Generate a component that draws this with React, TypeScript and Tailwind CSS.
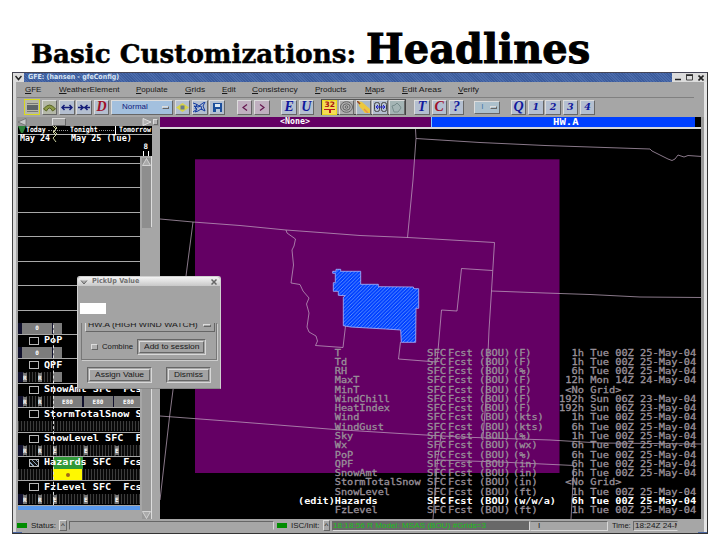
import { useLayoutEffect, useRef, useState } from "react";
import type { ReactNode } from "react";

// Stretches a line of text horizontally until it fills its box.
function Fit({ className = "", children }: { className?: string; children: ReactNode }) {
  const outer = useRef<HTMLSpanElement>(null);
  const inner = useRef<HTMLSpanElement>(null);
  const [scale, setScale] = useState(1);
  useLayoutEffect(() => {
    if (outer.current && inner.current) {
      setScale(outer.current.clientWidth / inner.current.offsetWidth);
    }
  }, []);
  return (
    <span ref={outer} className={`flex shrink-0 items-center ${className}`}>
      <span ref={inner} className="block shrink-0 origin-left whitespace-pre" style={{ transform: `scaleX(${scale})` }}>
        {children}
      </span>
    </span>
  );
}

const raised = "border border-t-[#dcdcdc] border-l-[#dcdcdc] border-b-[#666] border-r-[#666]";
const sunken = "border border-t-[#666] border-l-[#666] border-b-[#d8d8d8] border-r-[#d8d8d8]";

const menus: [string, string][] = [
  ["GFE", "w-4 mr-[18px]"],
  ["WeatherElement", "w-[60px] mr-[17px]"],
  ["Populate", "w-8 mr-[17px]"],
  ["Grids", "w-5 mr-[17px]"],
  ["Edit", "w-3.5 mr-4"],
  ["Consistency", "w-[46px] mr-[17px]"],
  ["Products", "w-8 mr-[18px]"],
  ["Maps", "w-5 mr-[17px]"],
  ["Edit Areas", "w-[39px] mr-[17px]"],
  ["Verify", "w-[21px]"],
];

function Tool({ className = "bg-[#b4bfd0]", children }: { className?: string; children?: ReactNode }) {
  return (
    <div className={`flex h-[15px] w-[15.5px] shrink-0 items-center justify-center ${raised} ${className}`}>{children}</div>
  );
}

function Letter({ c, red = false }: { c: string; red?: boolean }) {
  return (
    <Tool>
      <span className={`font-['Liberation_Serif',serif] text-[14px] leading-none font-bold italic ${red ? "text-[#a01028]" : "text-[#10189c]"}`}>{c}</span>
    </Tool>
  );
}

function Digit({ c }: { c: string }) {
  return (
    <Tool>
      <span className="font-['DejaVu_Serif',serif] text-[9.5px] leading-none font-bold text-[#10189c] italic">{c}</span>
    </Tool>
  );
}

function Toolbar() {
  return (
    <div className="flex h-[19px] items-center gap-[1.8px] pb-px pl-[8px]">
      <div className="flex h-4 w-4 shrink-0 items-center justify-center border border-[#d8d820] bg-[#b8b8a8]">
        <svg width="11" height="9" viewBox="0 0 11 9"><path d="M0 .5h11M0 8.500h11" stroke="#777" strokeWidth="1" /><rect y="2" width="11" height="5" fill="#5e6468" /></svg>
      </div>
      <Tool className="bg-[#b4b8a8]">
        <svg width="13" height="9" viewBox="0 0 13 9"><path d="M.5 6Q6.500-2 12.500 6L9.500 8Q6.500 2 3.500 8Z" fill="#8c9a48" stroke="#596328" /></svg>
      </Tool>
      <Tool>
        <svg width="12" height="7" viewBox="0 0 12 7"><path d="M1 3.500h10M3.500 1 1 3.500 3.500 6M8.500 1 11 3.500 8.500 6" fill="none" stroke="#141c78" strokeWidth="1.500" /></svg>
      </Tool>
      <Tool>
        <svg width="12" height="7" viewBox="0 0 12 7"><path d="M0 3.500h12M2.500 1 5 3.500 2.500 6M9.500 1 7 3.500 9.500 6" fill="none" stroke="#141c78" strokeWidth="1.500" /></svg>
      </Tool>
      <Letter c="D" red />
      <div className={`flex h-[15px] w-[62px] shrink-0 items-center bg-[#a3c0de] pl-[10px] text-[#10187c] ${raised}`}>
        <Fit className="w-[26px]">Normal</Fit>
        <span className={`ml-[14px] h-[3px] w-[7px] bg-[#b8cce0] ${raised}`} />
      </div>
      <Tool>
        <svg width="13" height="9" viewBox="0 0 13 9"><path d="M0 4.500 6.500 0 13 4.500 6.500 9Z" fill="#d8d448" /><path d="M4.500 2.500h4v4h-4z" fill="#6a7a8a" /></svg>
      </Tool>
      <Tool>
        <svg width="13" height="11" viewBox="0 0 13 11"><path d="M0 1 3 2 6 4 10 1 12 0 10 4 12 9 8 7 5 9 2 10 4 7 1 4 5 5 8 4 9 8M0 10 4 7M4 2 2 7" fill="none" stroke="#123aa0" strokeWidth="1" /></svg>
      </Tool>
      <Tool>
        <svg width="9" height="9" viewBox="0 0 9 9"><path d="M0 0h9v9H0z" fill="#1c4f9c" /><path d="M2 1h5v3H2z" fill="#dce8f4" /><path d="M3 6h4v3H3z" fill="#b8c8dc" /></svg>
      </Tool>
      <div className="ml-[8.500px]" />
      <Tool className="bg-[#c0b0c0]">
        <svg width="6" height="7" viewBox="0 0 6 7"><path d="M5 .5 1 3.500 5 6.500" fill="none" stroke="#64164e" strokeWidth="1.200" /></svg>
      </Tool>
      <Tool className="bg-[#c0b0c0]">
        <svg width="6" height="7" viewBox="0 0 6 7"><path d="M1 .5 5 3.500 1 6.500" fill="none" stroke="#64164e" strokeWidth="1.200" /></svg>
      </Tool>
      <div className="ml-[8px]" />
      <Letter c="E" />
      <Letter c="U" />
      <div className="ml-[5px] flex h-4 shrink-0 items-center gap-[1.300px] border border-t-[#555] border-r-[#444] border-b-[#444] border-l-[#444]">
        <div className="flex h-[15px] w-[15.500px] flex-col items-center justify-center border border-[#e8dc20] bg-[#f4dc58]">
          <span className="border-b border-[#b81c20] font-['DejaVu_Sans',sans-serif] text-[7.500px] leading-[8px] font-bold text-[#a81410]">32</span>
          <span className="h-[3px] w-[2px] bg-[#b81c20]" />
        </div>
        <Tool className="bg-[#b0b0b0]">
          <svg width="13" height="12" viewBox="0 0 13 12"><g fill="none" stroke="#646464"><ellipse cx="6.500" cy="6" rx="6" ry="5.300" /><ellipse cx="6.500" cy="6" rx="3.700" ry="3.200" /><circle cx="6.500" cy="6" r="1.300" /></g></svg>
        </Tool>
        <Tool className="bg-[#a8b8c4]">
          <svg width="13" height="12" viewBox="0 0 13 12"><path d="M1 0 5 1 13 8 13 12 8 12 2 5Z" fill="#ecc83c" /><path d="m0 0 3 3" stroke="#94452c" strokeWidth="1.500" /><path d="m7 8 4 4" stroke="#e89048" strokeWidth="1.500" /></svg>
        </Tool>
        <Tool>
          <svg width="13" height="11" viewBox="0 0 13 11"><g fill="none" stroke="#444"><rect x=".5" y=".5" width="5" height="9" rx="2" /><rect x="7.500" y=".5" width="5" height="9" rx="2" /></g><path d="M2 5h9M4 3 2 5l2 2M9 3l2 2-2 2" fill="none" stroke="#2020c8" /></svg>
        </Tool>
        <Tool className="bg-[#a4b4b4]">
          <svg width="11" height="11" viewBox="0 0 11 11"><path d="M1 4 4 3 6 1 9 4 10 6 7 10 3 10 2 7Z" fill="none" stroke="#788c8c" /></svg>
        </Tool>
      </div>
      <div className="ml-[5px]" />
      <Letter c="T" />
      <Letter c="C" red />
      <Letter c="?" />
      <div className={`ml-[8px] flex h-[13px] w-[26px] shrink-0 items-center gap-[7px] bg-[#acc0cc] pl-[6px] text-[#4878a8] ${raised}`}>
        <span>I</span>
        <span className={`h-[3px] w-[7px] ${raised}`} />
      </div>
      <div className="ml-[7px]" />
      <Letter c="Q" />
      <Digit c="1" />
      <Digit c="2" />
      <Digit c="3" />
      <Digit c="4" />
    </div>
  );
}

const mono = "font-['DejaVu_Sans_Mono','Liberation_Mono',monospace]";
const dots = "bg-[repeating-linear-gradient(90deg,#3c3c3c_0_1px,#080808_1px_3px)]";

type Seg = { cls: string; t: string };
const g = "bg-[#7c7c7c] justify-center";
const shortBar: Seg[] = [{ cls: "w-[4px] bg-[#10102c]", t: "" }, { cls: `w-[30px] ${g}`, t: "0" }, { cls: "w-[1px] bg-[#10102c]", t: "" }, { cls: `w-[9px] ${g}`, t: "" }];
const rr: Seg[] = [{ cls: "w-[5px] bg-[#10102c]", t: "" }, { cls: "w-[15px]", t: "R" }, { cls: "w-[15px]", t: "R" }];
const marks: Seg[] = [...rr, { cls: "w-[31px]", t: "E" }, { cls: "w-[31px]", t: "E" }, { cls: "w-[25px]", t: "E" }];

function Cells({ segs }: { segs: Seg[] }) {
  return (
    <div className="flex h-[11px] pt-[0.500px]">
      {segs.map((s, i) => (
        <span key={i} className={`flex h-full shrink-0 items-center overflow-hidden text-[6px] font-bold text-white ${s.cls} ${s.cls.includes("bg-") ? "" : dots}`}>
          {s.t.length === 1 && s.t !== "0" && s.t !== " " ? <span className="bg-[#777] leading-[9px]">{s.t}</span> : s.t}
        </span>
      ))}
    </div>
  );
}

function Row({ label, segs, haz = false }: { label: string; segs: Seg[]; haz?: boolean }) {
  return (
    <div className="h-[24.400px] shrink-0 overflow-hidden border-b-[1.500px] border-[#a8a8a8]">
      <div className="flex h-[12px] items-center">
        {label && (
          <>
            <span className={`mr-[5px] ml-[11px] h-[8px] w-[10px] shrink-0 border border-[#b8b8b8] ${haz ? "bg-[repeating-linear-gradient(45deg,#111_0_2px,#88a0b8_2px_3px)]" : ""}`} />
            <span className={`flex h-full ${haz ? "bg-[linear-gradient(90deg,transparent_9px,#309838_9px_39px,transparent_39px)]" : ""}`}>
              {label.length > 3 ? <Fit className="w-[98px]">{label}</Fit> : <Fit className="w-[18px]">{label}</Fit>}
            </span>
          </>
        )}
      </div>
      <Cells segs={segs} />
    </div>
  );
}

function GridManager() {
  const e80: Seg = { cls: `w-[29px] ${g}`, t: "E80" };
  const gap: Seg = { cls: "w-[1.500px] bg-[#10102c]", t: "" };
  return (
    <div className="flex w-[142.500px] shrink-0 flex-col">
      <div className="flex h-[134px] shrink-0 flex-col">
        <div className="flex h-[9px] w-[142px] items-center bg-[#969696]">
          <svg width="10" height="8" viewBox="0 0 10 8"><path d="M1 4 9 .5v7Z" fill="#c8c8c8" stroke="#666" strokeWidth=".7" /></svg>
          <span className={`ml-[25px] h-2 w-[14px] bg-[#a8a8a8] ${raised}`} />
          <svg className="ml-[76px]" width="10" height="8" viewBox="0 0 10 8"><path d="M9 4 1 .5v7Z" fill="#b0b0b0" stroke="#eee" strokeWidth=".8" /></svg>
          <span className={`ml-px h-[6px] w-[5px] bg-[#b8b8b8] ${raised}`} />
        </div>
        <div className={`relative h-[30px] w-[134px] overflow-hidden bg-black ml-px text-[7.500px] font-bold text-white ${mono}`}>
          <div className="flex h-[9px] items-center border-b border-[#b0b0b0]">
            <svg width="8" height="8" viewBox="0 0 8 8"><path d="M0 0h8L5 7H3Z" fill="#2d8038" /></svg>
            <Fit className="w-[20px]">Today</Fit>
            <span className="mx-[2px] w-[20px] border-b border-dotted border-[#999]" />
            <Fit className="w-[28px]">Tonight</Fit>
            <span className="mx-[1px] w-[15px] border-b border-dotted border-[#999]" />
            <span className="mr-[3px] h-full w-px bg-white" />
            <Fit className="w-[32px]">Tomorrow</Fit>
          </div>
          <div className="flex h-[8px] items-center pl-[2px] text-[8px]">
            <Fit className="w-[30px]">May 24</Fit>
            <Fit className="ml-[21px] w-[61px]">May 25 (Tue)</Fit>
          </div>
          <div className="flex h-[8px] items-center justify-end pr-[4px]">8</div>
          <div className="ml-auto mr-[3px] h-[5px] w-[6px] border-x border-white" />
          <svg className="absolute top-0 left-[34px]" width="6" height="17" viewBox="0 0 6 17"><path d="M1 0 4 3 1 6 4 9 1 12 4 16M3 0 5 2 2 5 5 8" fill="none" stroke="#ccd0a0" strokeWidth="1" /></svg>
        </div>
        <div className="flex h-[95px]">
          <div className="ml-px flex w-[122px] flex-col bg-black">
            <div className="h-[8px] shrink-0 border-y-[1.500px] border-[#a8a8a8]" />
            {[0, 1, 2].map((i) => <div key={i} className="h-[24.400px] shrink-0 border-b-[1.500px] border-[#a8a8a8]" />)}
          </div>
          <div className="ml-[2px] mt-[2px] h-[70px] w-[9px] bg-[#8e8e8e]">
            <svg width="9" height="8" viewBox="0 0 9 8"><path d="M4.500 .5 8.500 7.500h-8Z" fill="#aaa" stroke="#e0e0e0" strokeWidth=".8" /></svg>
          </div>
          <div className="h-[71px] w-px bg-[#ddd]" />
        </div>
      </div>
      <div className="flex h-[268px] shrink-0">
        <div className={`relative ml-px flex w-[122px] flex-col overflow-hidden bg-black text-[9px] font-bold text-white ${mono}`}>
          <div className="h-[10.800px] shrink-0 border-b-[1.500px] border-[#a8a8a8]" />
          {[0, 1].map((i) => <div key={i} className="h-[24.400px] shrink-0 border-b-[1.500px] border-[#a8a8a8]" />)}
          <Row label="" segs={shortBar} />
          <Row label="PoP" segs={shortBar} />
          <Row label="QPF" segs={[...rr, { cls: `w-[9px] ${g}`, t: "" }]} />
          <Row label="SnowAmt SFC  Fcs" segs={[...rr, e80, gap, e80, gap, e80]} />
          <Row label="StormTotalSnow S" segs={[{ cls: "w-[122px]", t: "" }]} />
          <Row label="SnowLevel SFC  F" segs={marks} />
          <Row haz label="Hazards SFC  Fcs" segs={[{ cls: "w-[35px]", t: "" }, { cls: "w-[29px] bg-[#fff800] justify-center", t: " " }, { cls: "w-[58px]", t: "" }]} />
          <Row label="FzLevel SFC  Fcs" segs={marks} />
          <div className="h-[4px] shrink-0 bg-[#5898ec]" />
          <div className="flex-1 bg-[#a6a6a6]" />
          <div className="absolute top-[74px] left-[35px] h-[180px] border-l border-dashed border-[#ddd]" />
          <div className="absolute top-[222px] left-[48px] size-[4px] rounded-full bg-[#a06818]" />
        </div>
        <div className="mt-[135px] ml-[2px] flex w-[9px] flex-col justify-end bg-[#989898]">
          <svg width="9" height="8" viewBox="0 0 9 8"><path d="M4.500 7.500 8.500 .5h-8Z" fill="#aaa" stroke="#e0e0e0" strokeWidth=".8" /></svg>
        </div>
        <div className="mt-[135px] w-px bg-[#ddd]" />
      </div>
    </div>
  );
}

const elements = [
  ["T", "(F)", "  1h Tue 00Z 25-May-04"],
  ["Td", "(F)", "  1h Tue 00Z 25-May-04"],
  ["RH", "(%)", "  6h Tue 00Z 25-May-04"],
  ["MaxT", "(F)", " 12h Mon 14Z 24-May-04"],
  ["MinT", "(F)", " <No Grid>            "],
  ["WindChill", "(F)", "192h Sun 06Z 23-May-04"],
  ["HeatIndex", "(F)", "192h Sun 06Z 23-May-04"],
  ["Wind", "(kts)", "  1h Tue 00Z 25-May-04"],
  ["WindGust", "(kts)", "  6h Tue 00Z 25-May-04"],
  ["Sky", "(%)", "  1h Tue 00Z 25-May-04"],
  ["Wx", "(wx)", "  6h Tue 00Z 25-May-04"],
  ["PoP", "(%)", "  6h Tue 00Z 25-May-04"],
  ["QPF", "(in)", "  6h Tue 00Z 25-May-04"],
  ["SnowAmt", "(in)", "  6h Tue 00Z 25-May-04"],
  ["StormTotalSnow", "(in)", " <No Grid>            "],
  ["SnowLevel", "(ft)", "  1h Tue 00Z 25-May-04"],
  ["Hazards", "(w/w/a)", "  6h Tue 00Z 25-May-04"],
  ["FzLevel", "(ft)", "  1h Tue 00Z 25-May-04"],
];

function MapView() {
  return (
    <div className="flex min-w-0 flex-1 flex-col">
      <div className={`flex h-[10px] shrink-0 items-center bg-black text-[8px] font-bold text-white ${mono}`}>
        <div className="flex h-full w-[271px] items-center justify-center bg-[#640064]"><Fit className="w-[30px]">&lt;None&gt;</Fit></div>
        <div className="flex h-full w-[264px] items-center justify-center border-l border-[#8cf] bg-[#0040ff] pl-[6px]"><Fit className="w-[26px] text-[9px]">HW.A</Fit></div>
      </div>
      <div className="h-[1.500px] shrink-0 bg-[#d8d8d8]" />
      <div className="relative flex-1 overflow-hidden bg-black">
        <svg className="block" width="542" height="392" viewBox="160 129 542 392">
          <defs>
            <pattern id="hatch" width="3.600" height="3.600" patternUnits="userSpaceOnUse">
              <path d="M-1 4.600 4.600-1M-1 1 1-1M2.600 4.600 4.600 2.600" stroke="#78a8ff" strokeWidth=".75" />
            </pattern>
          </defs>
          <rect x="195" y="159.300" width="364.500" height="313.700" fill="#640064" />
          <g id="borders" fill="none" stroke="#c4acc4" strokeWidth=".7">
            <path d="M160 219 193 222 240 225.500 286 230 327 233 360 235.500 408 237.500 494.500 242.500 491.500 291 489 330 486 400 483 437" />
            <path d="M193 222 186 276 173 390 169.500 417 160 500M415.500 129 416 138.500 413 180 407.500 237.500M416 138.500 480 142.500 545 145.500 620 148 650 149 652 151 668 159 672 160.500 675 159 678 155 684 157 688 155.500 702 156.500" />
            <path d="M286 230 287 233 295.500 239 294 246 292 250 293.500 265 291 283 300 284.500 303 291 309 298 306.500 304 309 313 307 327 309 332 316 336 317.500 341 315.500 345.500 343 347.500 345.500 326" />
            <path d="M492.500 270.500 461.500 268.500 457 311 441.500 310 437 362 398.500 359 400.500 342M491.500 291 545 293 590 294.500 640 297 702 297.500" />
            <path d="M160 416 240 422 335 429.500 400 433.500 460 437 550 440 600 443 702 444M441 436 437.500 460 433 519M437.500 460 500 462 574 465.500 571 519" />
          </g>
          <path id="zone" d="M336 269.300h4.700v2h20v13h17.600v2.400l35 .3.700 1.700h4.700v19.600H416l-.3 34h-14.400l-.6-12.300-15.400-1-34.600-2-7.400-1.300V297.300l2-1.600-7-.4v-4h-5v-8.600h2v-9.400h-2.600v-2H336Z" fill="#0040ff" />
          <path d="M336 269.300h4.700v2h20v13h17.600v2.400l35 .3.700 1.700h4.700v19.600H416l-.3 34h-14.400l-.6-12.300-15.400-1-34.600-2-7.400-1.300V297.300l2-1.600-7-.4v-4h-5v-8.600h2v-9.400h-2.600v-2H336Z" fill="url(#hatch)" stroke="#a8b8ff" strokeWidth=".8" />
        </svg>
        <div className={`absolute top-[220px] left-[138px] text-[9px] text-[#999099] ${mono}`}>
          {elements.map(([name, unit, time]) => (
            <div key={name} className={`flex h-[9.270px] items-center ${name === "Hazards" ? "font-bold text-white" : "[-webkit-text-stroke:0.3px]"}`}>
              <Fit className="w-[129px]">{(name === "Hazards" ? "(edit)" : "      ") + name.padEnd(15)}</Fit>
              <Fit className="w-[18.600px]">SFC</Fit>
              <Fit className="ml-[2.500px] w-[25px]">Fcst</Fit>
              <Fit className="ml-[6px] w-[31px]">(BOU)</Fit>
              <Fit className="ml-[3px] w-[43.400px]">{unit.padEnd(7)}</Fit>
              <Fit className="ml-[3.500px] w-[136.500px]">{time}</Fit>
            </div>
          ))}
        </div>
      </div>
    </div>
  );
}

function PickUpDialog() {
  return (
    <div className="absolute top-[276px] left-[77px] flex h-[113px] w-[144px] flex-col rounded-t-[3px] border border-[#d0d0d0] border-b-[#888] bg-[#a3a3a3] text-[8px] text-[#181818]">
      <div className="flex h-[9px] shrink-0 items-center rounded-t-[3px] bg-gradient-to-b from-[#f4f4f4] to-[#c8c8c8] pr-[3px] pl-[2px] text-[7px] font-bold text-[#707070]">
        <svg width="8" height="6" viewBox="0 0 8 6"><path d="M1 1.500 4 5 7 1.500" fill="#aaa" stroke="#666" /></svg>
        <Fit className={`ml-[4px] w-[47px] font-['DejaVu_Sans',sans-serif]`}>PickUp Value</Fit>
        <svg className="ml-auto" width="6" height="6" viewBox="0 0 6 6"><path d="m.5 .5 5 5m0-5-5 5" stroke="#666" strokeWidth="1.500" /></svg>
      </div>
      <div className="mt-[17px] ml-[2px] h-[11px] w-[26px] shrink-0 bg-white" />
      <div className="mt-[9px] mx-[3px] flex h-[37px] shrink-0 flex-col border-x border-b border-x-[#777] border-b-[#777] shadow-[1px_1px_0_#ccc]">
        <div className="ml-[3px] flex h-[9px] w-[130px] items-end overflow-hidden border-r border-b border-l border-r-[#666] border-b-[#666] border-l-[#ddd]">
          <div className="flex h-[12px] shrink-0 items-center pl-[2px]">
            <Fit className="w-[110px]">HW.A (HIGH WIND WATCH)</Fit>
            <span className={`ml-[5px] h-[3px] w-[8px] ${raised}`} />
          </div>
        </div>
        <div className="mt-[7px] flex items-center pl-[9px]">
          <span className={`h-[6px] w-[7px] bg-[#b0b0b0] ${raised}`} />
          <Fit className="ml-[4px] w-[31px]">Combine</Fit>
          <div className={`ml-[4px] p-px ${sunken}`}>
            <div className={`flex h-[12px] items-center px-[4px] ${raised}`}><Fit className="w-[55px]">Add to session</Fit></div>
          </div>
        </div>
      </div>
      <div className="mt-[7px] flex justify-between pr-[9px] pl-[9px]">
        <div className={`p-px ${sunken}`}>
          <div className={`flex h-[12px] items-center px-[5px] ${raised}`}><Fit className="w-[49px]">Assign Value</Fit></div>
        </div>
        <div className={`p-px ${sunken}`}>
          <div className={`flex h-[12px] items-center px-[5px] ${raised}`}><Fit className="w-[29px]">Dismiss</Fit></div>
        </div>
      </div>
    </div>
  );
}

function StatusBar() {
  return (
    <div className="flex h-[13px] shrink-0 items-center">
      <span className="ml-[1px] h-[5px] w-[10px] bg-[#008c00]" />
      <Fit className="ml-[4px] w-[25px]">Status:</Fit>
      <span className={`ml-[3px] flex h-[11px] w-[8px] justify-center leading-[10px] ${raised}`}>^</span>
      <span className={`ml-[2px] h-[9px] w-[205px] ${sunken} border-b-transparent`} />
      <span className="ml-[3px] h-[5px] w-[10px] bg-[#008c00]" />
      <Fit className="ml-[4px] w-[28px]">ISC/Init:</Fit>
      <span className={`ml-[4px] flex h-[11px] w-[7px] justify-center leading-[10px] ${raised}`}>^</span>
      <span className={`ml-[2px] flex h-[10px] w-[198px] items-center bg-[#686868] text-[#18c018] ${sunken}`}><Fit className="w-[153px]">18:18:56 R Model: MSAS (BOU) #Grids=3</Fit></span>
      <span className={`flex h-[10px] w-[78px] items-center pl-[7px] ${sunken} border-l-transparent`}>I</span>
      <Fit className="ml-[4px] w-[19px]">Time:</Fit>
      <span className={`ml-[2px] flex h-[10px] w-[45px] items-center overflow-hidden pl-px ${sunken} border-r-transparent`}><Fit className="w-[46px]">18:24Z 24-M</Fit></span>
    </div>
  );
}

export default function App() {
  return (
    <div className="relative h-[540px] w-[720px] overflow-hidden bg-white font-['Liberation_Sans',Arial,sans-serif] text-[8px] leading-none text-[#181818]">
      <h1 className="flex h-[72px] items-baseline pt-[29px] pl-[31px] font-['DejaVu_Serif',serif] font-bold text-black">
        <Fit className="w-[325px] text-[26px] [-webkit-text-stroke:0.5px_black]">Basic Customizations:</Fit>
        <Fit className="ml-[10px] w-[224px] text-[41px] [-webkit-text-stroke:1px_black]">Headlines</Fit>
      </h1>
      <div className="relative ml-[12px] flex h-[462px] w-[696px] flex-col border border-t-[#445] border-r-[#333] border-b-[#333] border-l-[#444] bg-[#a6a6a6]">
        <div className="absolute right-0 bottom-0 size-[9px] bg-[#4a66a0]" />
        <div className="absolute bottom-0 left-0 size-[9px] bg-[#4a66a0]" />
        <div className="flex h-[9px] shrink-0 items-center bg-[repeating-linear-gradient(45deg,#3c5c9c_0_1px,#4c6cac_1px_2px)]">
          <div className="flex h-full w-[11px] items-center justify-center bg-[#dcdcdc]">
            <svg width="7" height="6" viewBox="0 0 7 6"><path d="M.5 1 3.500 4.500 6.500 1" fill="none" stroke="#222" strokeWidth="1.500" /></svg>
          </div>
          <Fit className="ml-[4px] w-[91px] font-['DejaVu_Sans',sans-serif] text-[7px] font-bold text-[#d8e4f4]">GFE: (hansen - gfeConfig)</Fit>
          <div className="ml-auto flex h-full w-[35px] items-center justify-around bg-[#dcdcdc]">
            <svg width="6" height="7" viewBox="0 0 6 7"><path d="M0 5.500h6" stroke="#222" strokeWidth="1.500" /></svg>
            <svg width="7" height="7" viewBox="0 0 7 7"><path d="M.5 1.500h6v4.500h-6z" fill="none" stroke="#444" /><path d="M0 1h7" stroke="#222" strokeWidth="1.500" /></svg>
            <svg width="6" height="6" viewBox="0 0 6 6"><path d="m.5 .5 5 5m0-5-5 5" stroke="#222" strokeWidth="1.600" /></svg>
          </div>
        </div>
        <div className="relative mb-[3px] flex flex-1 flex-col border-r-[3px] border-l-[3px] border-r-[#e4e4e4] border-l-[#dadada] bg-[#a6a6a6]">
          <div className="mr-[10px] ml-px flex h-[16px] shrink-0 items-center border-b border-[#808080] pt-px pl-[8px]">
            {menus.map(([name, w]) => (
              <Fit key={name} className={w}><span className="underline underline-offset-1">{name[0]}</span>{name.slice(1)}</Fit>
            ))}
          </div>
          <Toolbar />
          <div className="ml-px flex h-[402px] shrink-0">
            <GridManager />
            <MapView />
            <div className="w-[3px] shrink-0 bg-[#999]" />
          </div>
          <StatusBar />
        </div>
      </div>
      <PickUpDialog />
    </div>
  );
}
